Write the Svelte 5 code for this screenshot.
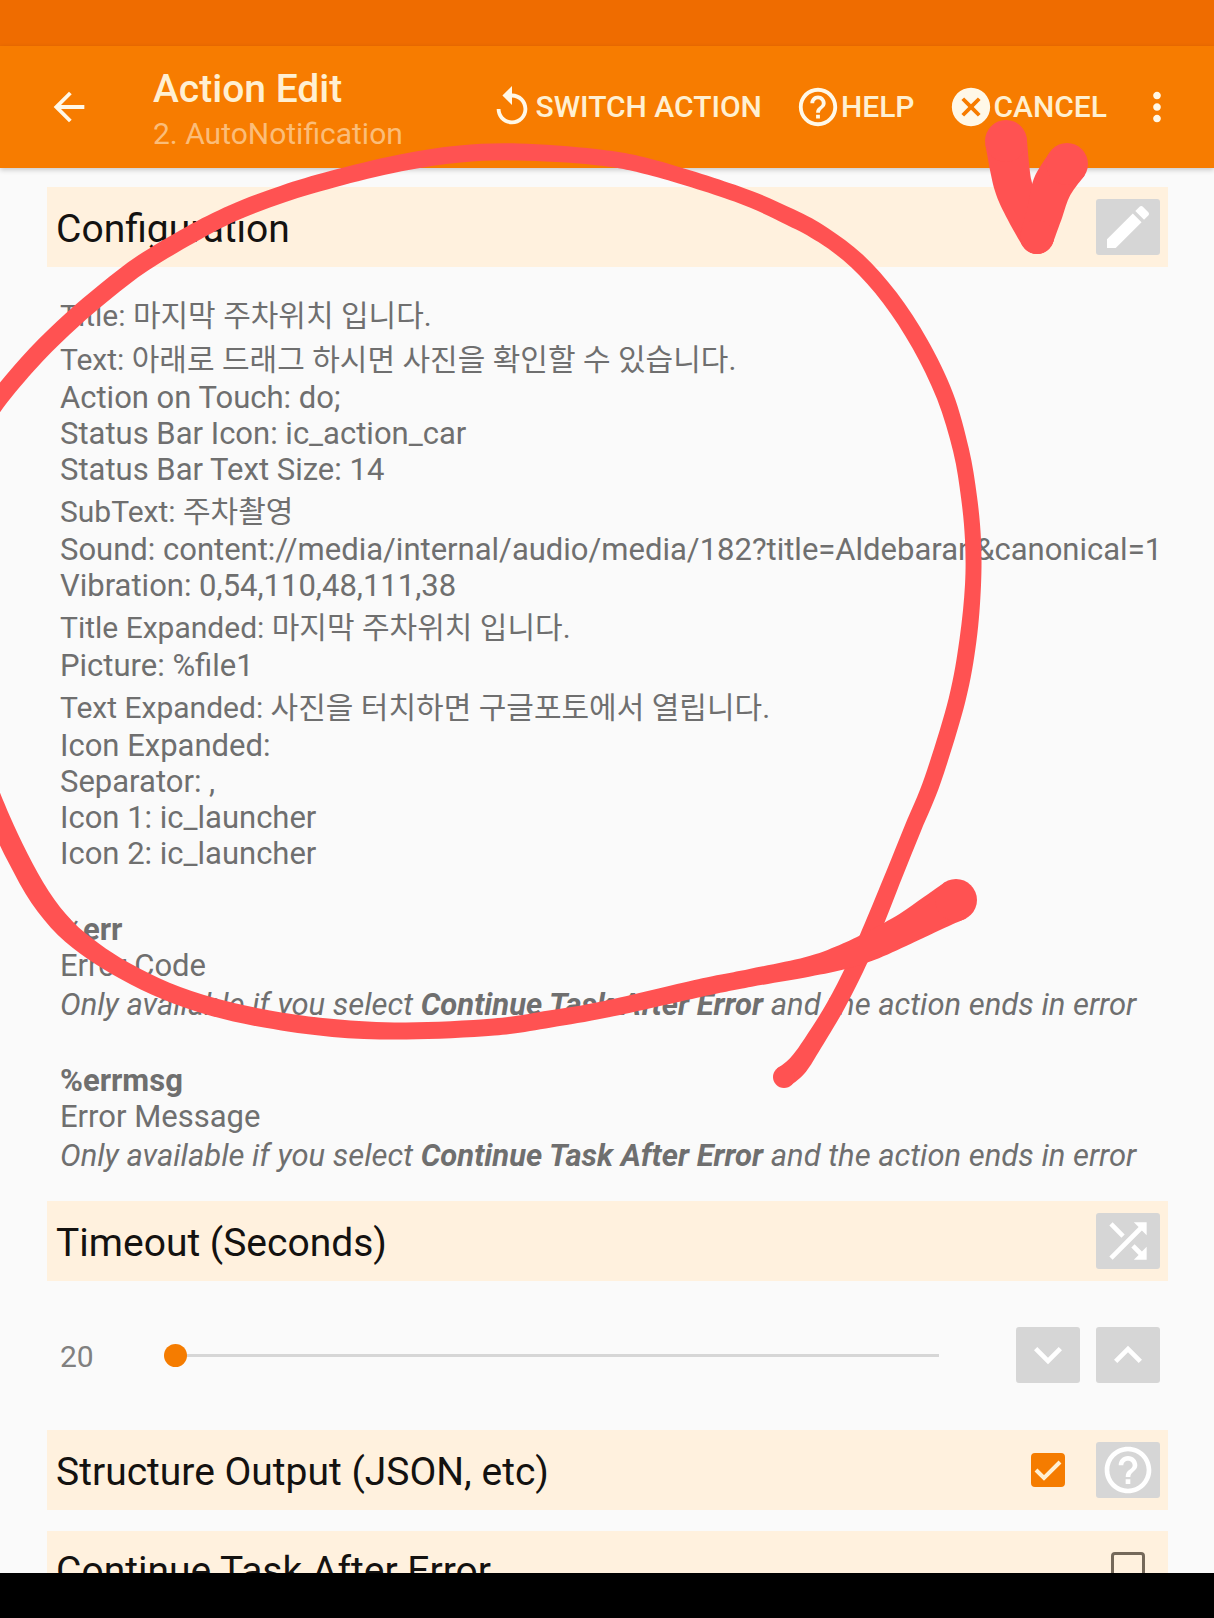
<script lang="ts">
	type Line = { label: string; value: string; tall?: boolean };
	type Point = [x: number, y: number, width: number];

	const config: Line[] = [
		{ label: 'Title', value: '마지막 주차위치 입니다.', tall: true },
		{ label: 'Text', value: '아래로 드래그 하시면 사진을 확인할 수 있습니다.', tall: true },
		{ label: 'Action on Touch', value: 'do;' },
		{ label: 'Status Bar Icon', value: 'ic_action_car' },
		{ label: 'Status Bar Text Size', value: '14' },
		{ label: 'SubText', value: '주차촬영', tall: true },
		{
			label: 'Sound',
			value: 'content://media/internal/audio/media/182?title=Aldebaran&canonical=1'
		},
		{ label: 'Vibration', value: '0,54,110,48,111,38' },
		{ label: 'Title Expanded', value: '마지막 주차위치 입니다.', tall: true },
		{ label: 'Picture', value: '%file1' },
		{ label: 'Text Expanded', value: '사진을 터치하면 구글포토에서 열립니다.', tall: true },
		{ label: 'Icon Expanded', value: '' },
		{ label: 'Separator', value: ',' },
		{ label: 'Icon 1', value: 'ic_launcher' },
		{ label: 'Icon 2', value: 'ic_launcher' }
	];

	const variables = [
		{ name: '%err', description: 'Error Code' },
		{ name: '%errmsg', description: 'Error Message' }
	];

	// Freehand marker strokes, each point with the pen width at that spot
	const strokes: Point[][] = [
		[
			[784, 1077, 22],
			[798, 1065, 21],
			[813, 1043, 19],
			[835, 1007, 18],
			[855, 968, 18],
			[873, 927, 18],
			[894, 875, 17],
			[913, 828, 17],
			[933, 779, 17],
			[957, 700, 17],
			[968, 640, 17],
			[973, 585, 16],
			[973, 540, 16],
			[969, 497, 16],
			[961, 450, 16],
			[945, 396, 17],
			[920, 344, 17],
			[890, 298, 17],
			[857, 261, 17],
			[823, 235, 17],
			[790, 217, 17],
			[737, 194, 16],
			[650, 167, 16],
			[595, 157, 16],
			[518, 152, 17],
			[460, 154, 17],
			[400, 163, 17],
			[333, 179, 17],
			[283, 194, 17],
			[233, 213, 17],
			[190, 235, 18],
			[143, 263, 18],
			[106, 291, 18],
			[72, 320, 18],
			[36, 355, 18],
			[0, 397, 18],
			[-24, 432, 18]
		],
		[
			[-16, 780, 20],
			[0, 820, 21],
			[18, 858, 21],
			[40, 897, 21],
			[65, 928, 20],
			[93, 951, 19],
			[125, 971, 18],
			[166, 991, 18],
			[213, 1007, 18],
			[267, 1019, 18],
			[333, 1028, 18],
			[406, 1031, 17],
			[494, 1027, 17],
			[550, 1019, 17],
			[607, 1009, 17],
			[700, 988, 18],
			[750, 978, 18],
			[807, 967, 20],
			[843, 957, 25],
			[873, 945, 29],
			[907, 928, 32],
			[933, 913, 37],
			[956, 900, 42]
		],
		[
			[1006, 141, 42],
			[1013, 185, 38],
			[1024, 212, 36],
			[1037, 237, 34]
		],
		[
			[1067, 164, 42],
			[1052, 187, 40],
			[1045, 212, 36],
			[1037, 237, 34]
		]
	];

	const MIN = 20;
	const MAX = 3600;

	let timeout = $state(20);
	let structureOutput = $state(true);
	let continueAfterError = $state(false);

	function step(by: number) {
		timeout = Math.min(MAX, Math.max(MIN, timeout + by));
	}

	// Smooth curve through the points (Catmull-Rom as cubic beziers)
	function curve(points: number[][]) {
		let d = '';
		for (let i = 0; i < points.length - 1; i++) {
			const p0 = points[i - 1] ?? points[i];
			const [x1, y1] = points[i];
			const [x2, y2] = points[i + 1];
			const p3 = points[i + 2] ?? points[i + 1];
			d += `C${x1 + (x2 - p0[0]) / 6} ${y1 + (y2 - p0[1]) / 6} `;
			d += `${x2 - (p3[0] - x1) / 6} ${y2 - (p3[1] - y1) / 6} ${x2} ${y2}`;
		}
		return d;
	}

	// One side of a stroke, half the pen width away from its centre
	function side(points: Point[], sign: number) {
		return points.map(([x, y, width], i) => {
			const before = points[i - 1] ?? points[i];
			const after = points[i + 1] ?? points[i];
			const dx = after[0] - before[0];
			const dy = after[1] - before[1];
			const k = (sign * width) / 2 / Math.hypot(dx, dy);
			return [x - dy * k, y + dx * k];
		});
	}

	function outline(points: Point[]) {
		const left = side(points, 1);
		const right = side(points, -1).reverse();
		return `M${left[0].join(' ')}${curve(left)}L${right[0].join(' ')}${curve(right)}Z`;
	}
</script>

{#snippet icon(path: string)}
	<svg class="icon" viewBox="0 0 24 24" aria-hidden="true"><path d={path} /></svg>
{/snippet}

{#snippet helpIcon()}
	{@render icon(
		'M11 18h2v-2h-2v2zm1-16C6.48 2 2 6.48 2 12s4.48 10 10 10 10-4.48 10-10S17.52 2 12 2zm0 18c-4.41 0-8-3.59-8-8s3.59-8 8-8 8 3.59 8 8-3.59 8-8 8zm0-14c-2.21 0-4 1.79-4 4h2c0-1.1.9-2 2-2s2 .9 2 2c0 2-3 1.75-3 5h2c0-2.25 3-2.5 3-5 0-2.21-1.79-4-4-4z'
	)}
{/snippet}

<div class="screen">
	<div class="status-bar"></div>

	<header class="app-bar">
		<button class="bar-button" aria-label="Back">
			{@render icon('M20 11H7.83l5.59-5.59L12 4l-8 8 8 8 1.41-1.41L7.83 13H20v-2z')}
		</button>
		<div class="titles">
			<h1>Action Edit</h1>
			<p>2. AutoNotification</p>
		</div>
		<div class="actions">
			<button class="bar-button">
				{@render icon(
					'M12 5V1L7 6l5 5V7c3.31 0 6 2.69 6 6s-2.69 6-6 6-6-2.69-6-6H4c0 4.42 3.58 8 8 8s8-3.58 8-8-3.58-8-8-8z'
				)}
				Switch Action
			</button>
			<button class="bar-button">
				{@render helpIcon()}
				Help
			</button>
			<button class="bar-button">
				{@render icon(
					'M12 2C6.47 2 2 6.47 2 12s4.47 10 10 10 10-4.47 10-10S17.53 2 12 2zm5 13.59L15.59 17 12 13.41 8.41 17 7 15.59 10.59 12 7 8.41 8.41 7 12 10.59 15.59 7 17 8.41 13.41 12 17 15.59z'
				)}
				Cancel
			</button>
		</div>
		<button class="bar-button" aria-label="More options">
			{@render icon(
				'M12 8c1.1 0 2-.9 2-2s-.9-2-2-2-2 .9-2 2 .9 2 2 2zm0 2c-1.1 0-2 .9-2 2s.9 2 2 2 2-.9 2-2-.9-2-2-2zm0 6c-1.1 0-2 .9-2 2s.9 2 2 2 2-.9 2-2-.9-2-2-2z'
			)}
		</button>
	</header>

	<main>
		<section class="heading">
			<h2>Configuration</h2>
			<button class="tile" aria-label="Edit configuration">
				{@render icon(
					'M3 17.25V21h3.75L17.81 9.94l-3.75-3.75L3 17.25zM20.71 7.04c.39-.39.39-1.02 0-1.41l-2.34-2.34c-.39-.39-1.02-.39-1.41 0l-1.83 1.83 3.75 3.75 1.83-1.83z'
				)}
			</button>
		</section>

		<div class="details">
			{#each config as line}
				<p class:tall={line.tall}>{line.label}: {line.value}</p>
			{/each}
			{#each variables as variable}
				<div class="variable">
					<p><b>{variable.name}</b></p>
					<p>{variable.description}</p>
					<p class="note">
						Only available if you select <b>Continue Task After Error</b> and the action ends in error
					</p>
				</div>
			{/each}
		</div>

		<section class="heading">
			<h2><label for="timeout">Timeout (Seconds)</label></h2>
			<button class="tile" aria-label="Use variable">
				{@render icon(
					'M10.59 9.17L5.41 4 4 5.41l5.17 5.17 1.42-1.41zM14.5 4l2.04 2.04L4 18.59 5.41 20 17.96 7.46 20 9.5V4h-5.5zm.33 9.41l-1.41 1.41 3.13 3.13L14.5 20H20v-5.5l-2.04 2.04-3.13-3.13z'
				)}
			</button>
		</section>

		<div class="slider-row">
			<output for="timeout">{timeout}</output>
			<input id="timeout" type="range" min={MIN} max={MAX} bind:value={timeout} />
			<button class="tile" aria-label="Decrease" onclick={() => step(-1)}>
				{@render icon('M7.41 8.59L12 13.17l4.59-4.58L18 10l-6 6-6-6 1.41-1.41z')}
			</button>
			<button class="tile" aria-label="Increase" onclick={() => step(1)}>
				{@render icon('M7.41 15.41L12 10.83l4.59 4.58L18 14l-6-6-6 6 1.41 1.41z')}
			</button>
		</div>

		<section class="heading">
			<h2><label for="structure">Structure Output (JSON, etc)</label></h2>
			<input id="structure" type="checkbox" bind:checked={structureOutput} />
			<button class="tile" aria-label="Help">
				{@render helpIcon()}
			</button>
		</section>

		<section class="heading plain">
			<h2><label for="continue">Continue Task After Error</label></h2>
			<input id="continue" type="checkbox" bind:checked={continueAfterError} />
		</section>
	</main>

	<div class="nav-bar"></div>

	<!-- hand-drawn marker over the page -->
	<svg class="marker" viewBox="0 0 1214 1618" aria-hidden="true">
		{#each strokes as points}
			<path d={outline(points)} />
			{#each [points[0], points[points.length - 1]] as [x, y, width]}
				<circle cx={x} cy={y} r={width / 2} />
			{/each}
		{/each}
	</svg>
</div>

<style>
	:global(body) {
		margin: 0;
	}

	.screen {
		position: relative;
		display: flex;
		flex-direction: column;
		height: 100vh;
		overflow: hidden;
		background: #fafafa;
		color: #6f6f6f;
		font-family: Roboto, 'Noto Sans CJK KR', sans-serif;
		font-size: 30px;
		line-height: 36px;
	}

	h1,
	h2,
	p {
		margin: 0;
	}

	button {
		display: flex;
		align-items: center;
		justify-content: center;
		padding: 0;
		border: none;
		background: none;
		font: inherit;
		cursor: pointer;
	}

	.icon {
		display: block;
		flex-shrink: 0;
		fill: currentColor;
	}

	.status-bar {
		flex-shrink: 0;
		height: 46px;
		background: #ef6c00;
	}

	.app-bar {
		z-index: 1;
		display: flex;
		flex-shrink: 0;
		align-items: center;
		height: 122px;
		padding: 0 34px 0 46px;
		background: #f77c00;
		box-shadow: 0 2px 5px rgba(0, 0, 0, 0.2);
	}

	.titles {
		flex: 1;
		margin-left: 61px;
		padding-top: 6px;
	}

	.titles h1 {
		color: #fff0d2;
		font-size: 39px;
		font-weight: 500;
		line-height: 48px;
	}

	.titles p {
		color: #fbbd79;
		line-height: 42px;
	}

	.actions {
		display: flex;
		gap: 33px;
		margin-right: 27px;
	}

	.bar-button {
		color: #fff0d2;
		font-weight: 500;
		text-transform: uppercase;
		white-space: nowrap;
	}

	.bar-button :global(.icon) {
		width: 46px;
		height: 46px;
		color: #fff8e8;
	}

	main {
		flex: 1;
		min-height: 0;
		padding: 19px 46px 0 47px;
		overflow-y: auto;
		scrollbar-width: none;
	}

	.heading {
		display: flex;
		align-items: center;
		gap: 31px;
		height: 80px;
		padding: 0 8px 0 9px;
		background: #fff1de;
	}

	.heading.plain {
		height: 76px;
		margin-top: 21px;
		padding-right: 23px;
	}

	h2 {
		flex: 1;
		padding-top: 4px;
		color: #141210;
		font-size: 39px;
		font-weight: 400;
		line-height: 48px;
	}

	.tile {
		width: 64px;
		height: 56px;
		border-radius: 3px;
		background: #d6d6d6;
		color: #fff;
	}

	.tile :global(.icon) {
		width: 56px;
		height: 56px;
	}

	.details {
		padding: 25px 0 27px 13px;
		font-size: 31px;
	}

	.details .tall {
		padding: 6px 0 2px;
		font-size: 30px;
	}

	.variable {
		margin-top: 40px;
	}

	.details .note {
		padding-top: 3px;
		font-style: italic;
	}

	.slider-row {
		display: flex;
		align-items: center;
		gap: 16px;
		padding: 46px 8px 47px 13px;
	}

	output {
		width: 88px;
		padding-top: 4px;
		color: #808080;
	}

	input[type='range'] {
		flex: 1;
		min-width: 0;
		height: 24px;
		margin: 0 61px 0 0;
		appearance: none;
		background: linear-gradient(#d6d6d6, #d6d6d6) center / 100% 3px no-repeat;
	}

	input[type='range']::-webkit-slider-thumb {
		width: 23px;
		height: 23px;
		appearance: none;
		border-radius: 50%;
		background: #f57c00;
	}

	input[type='checkbox'] {
		width: 34px;
		height: 34px;
		margin: 0;
		appearance: none;
		border: 3px solid #75695a;
		border-radius: 4px;
	}

	input[type='checkbox']:checked {
		border-color: #f57c00;
		background: #f57c00
			url("data:image/svg+xml,%3Csvg xmlns='http://www.w3.org/2000/svg' viewBox='0 0 28 28'%3E%3Cpath d='M2 14l8 8L26 6' fill='none' stroke='%23fff0d2' stroke-width='4'/%3E%3C/svg%3E")
			center / 28px 28px no-repeat;
	}

	.nav-bar {
		flex-shrink: 0;
		height: 45px;
		background: #000;
	}

	.marker {
		position: absolute;
		top: 0;
		left: 0;
		z-index: 2;
		width: 100%;
		fill: #ff5252;
		pointer-events: none;
	}
</style>
